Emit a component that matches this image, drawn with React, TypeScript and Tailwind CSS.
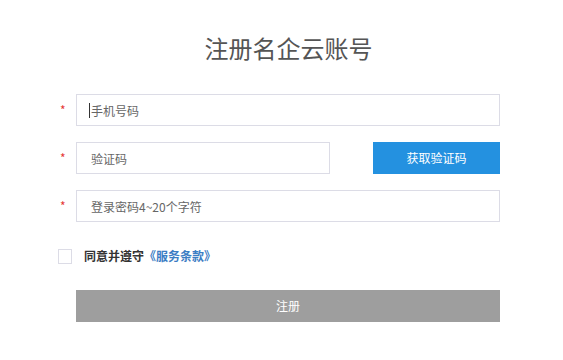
import React from 'react';

const FONT = { fontFamily: '"Noto Sans CJK SC", "Noto Sans", sans-serif' };

const Field: React.FC<{ placeholder: string; width?: string; caret?: boolean }> = ({ placeholder, width = 'w-[424px]', caret }) => (
  <div className={`relative ${width} h-8`}>
    <input
      placeholder={placeholder}
      className="w-full h-full border border-[#dcdce6] px-[14px] text-[12px] text-[#333] placeholder:text-[#666] outline-none bg-white"
    />
    {caret && <span className="absolute left-[13px] top-[9px] w-px h-[15px] bg-[#333]" />}
  </div>
);

const Row: React.FC<{ children: React.ReactNode }> = ({ children }) => (
  <div className="flex items-center">
    <span className="w-[18px] pl-[2px] text-[12px] text-[#e53935]">*</span>
    {children}
  </div>
);

export default function App() {
  return (
    <div className="w-[563px] h-[360px] bg-white" style={FONT}>
      <h1 className="pt-[32px] text-center text-[24px] leading-8 text-[#555] pl-[14px]">注册名企云账号</h1>
      <div className="ml-[58px] w-[442px] mt-[30px] flex flex-col gap-4">
        <Row><Field placeholder="手机号码" caret /></Row>
        <Row>
          <Field placeholder="验证码" width="w-[254px]" />
          <button className="ml-auto w-[127px] h-8 bg-[#2491e0] text-white text-[12px]">获取验证码</button>
        </Row>
        <Row><Field placeholder="登录密码4~20个字符" /></Row>
      </div>
      <div className="ml-[58px] mt-[25px] flex items-center gap-3">
        <span className="w-[14px] h-[15px] border border-[#dcdce6] bg-white" />
        <span className="text-[12px] font-bold text-[#333]">
          同意并遵守<span className="text-[#3b7dc4]">《服务条款》</span>
        </span>
      </div>
      <div className="ml-[76px] mt-[25px]">
        <button className="w-[424px] h-8 bg-[#9e9e9e] text-white text-[12px]">注册</button>
      </div>
    </div>
  );
}
